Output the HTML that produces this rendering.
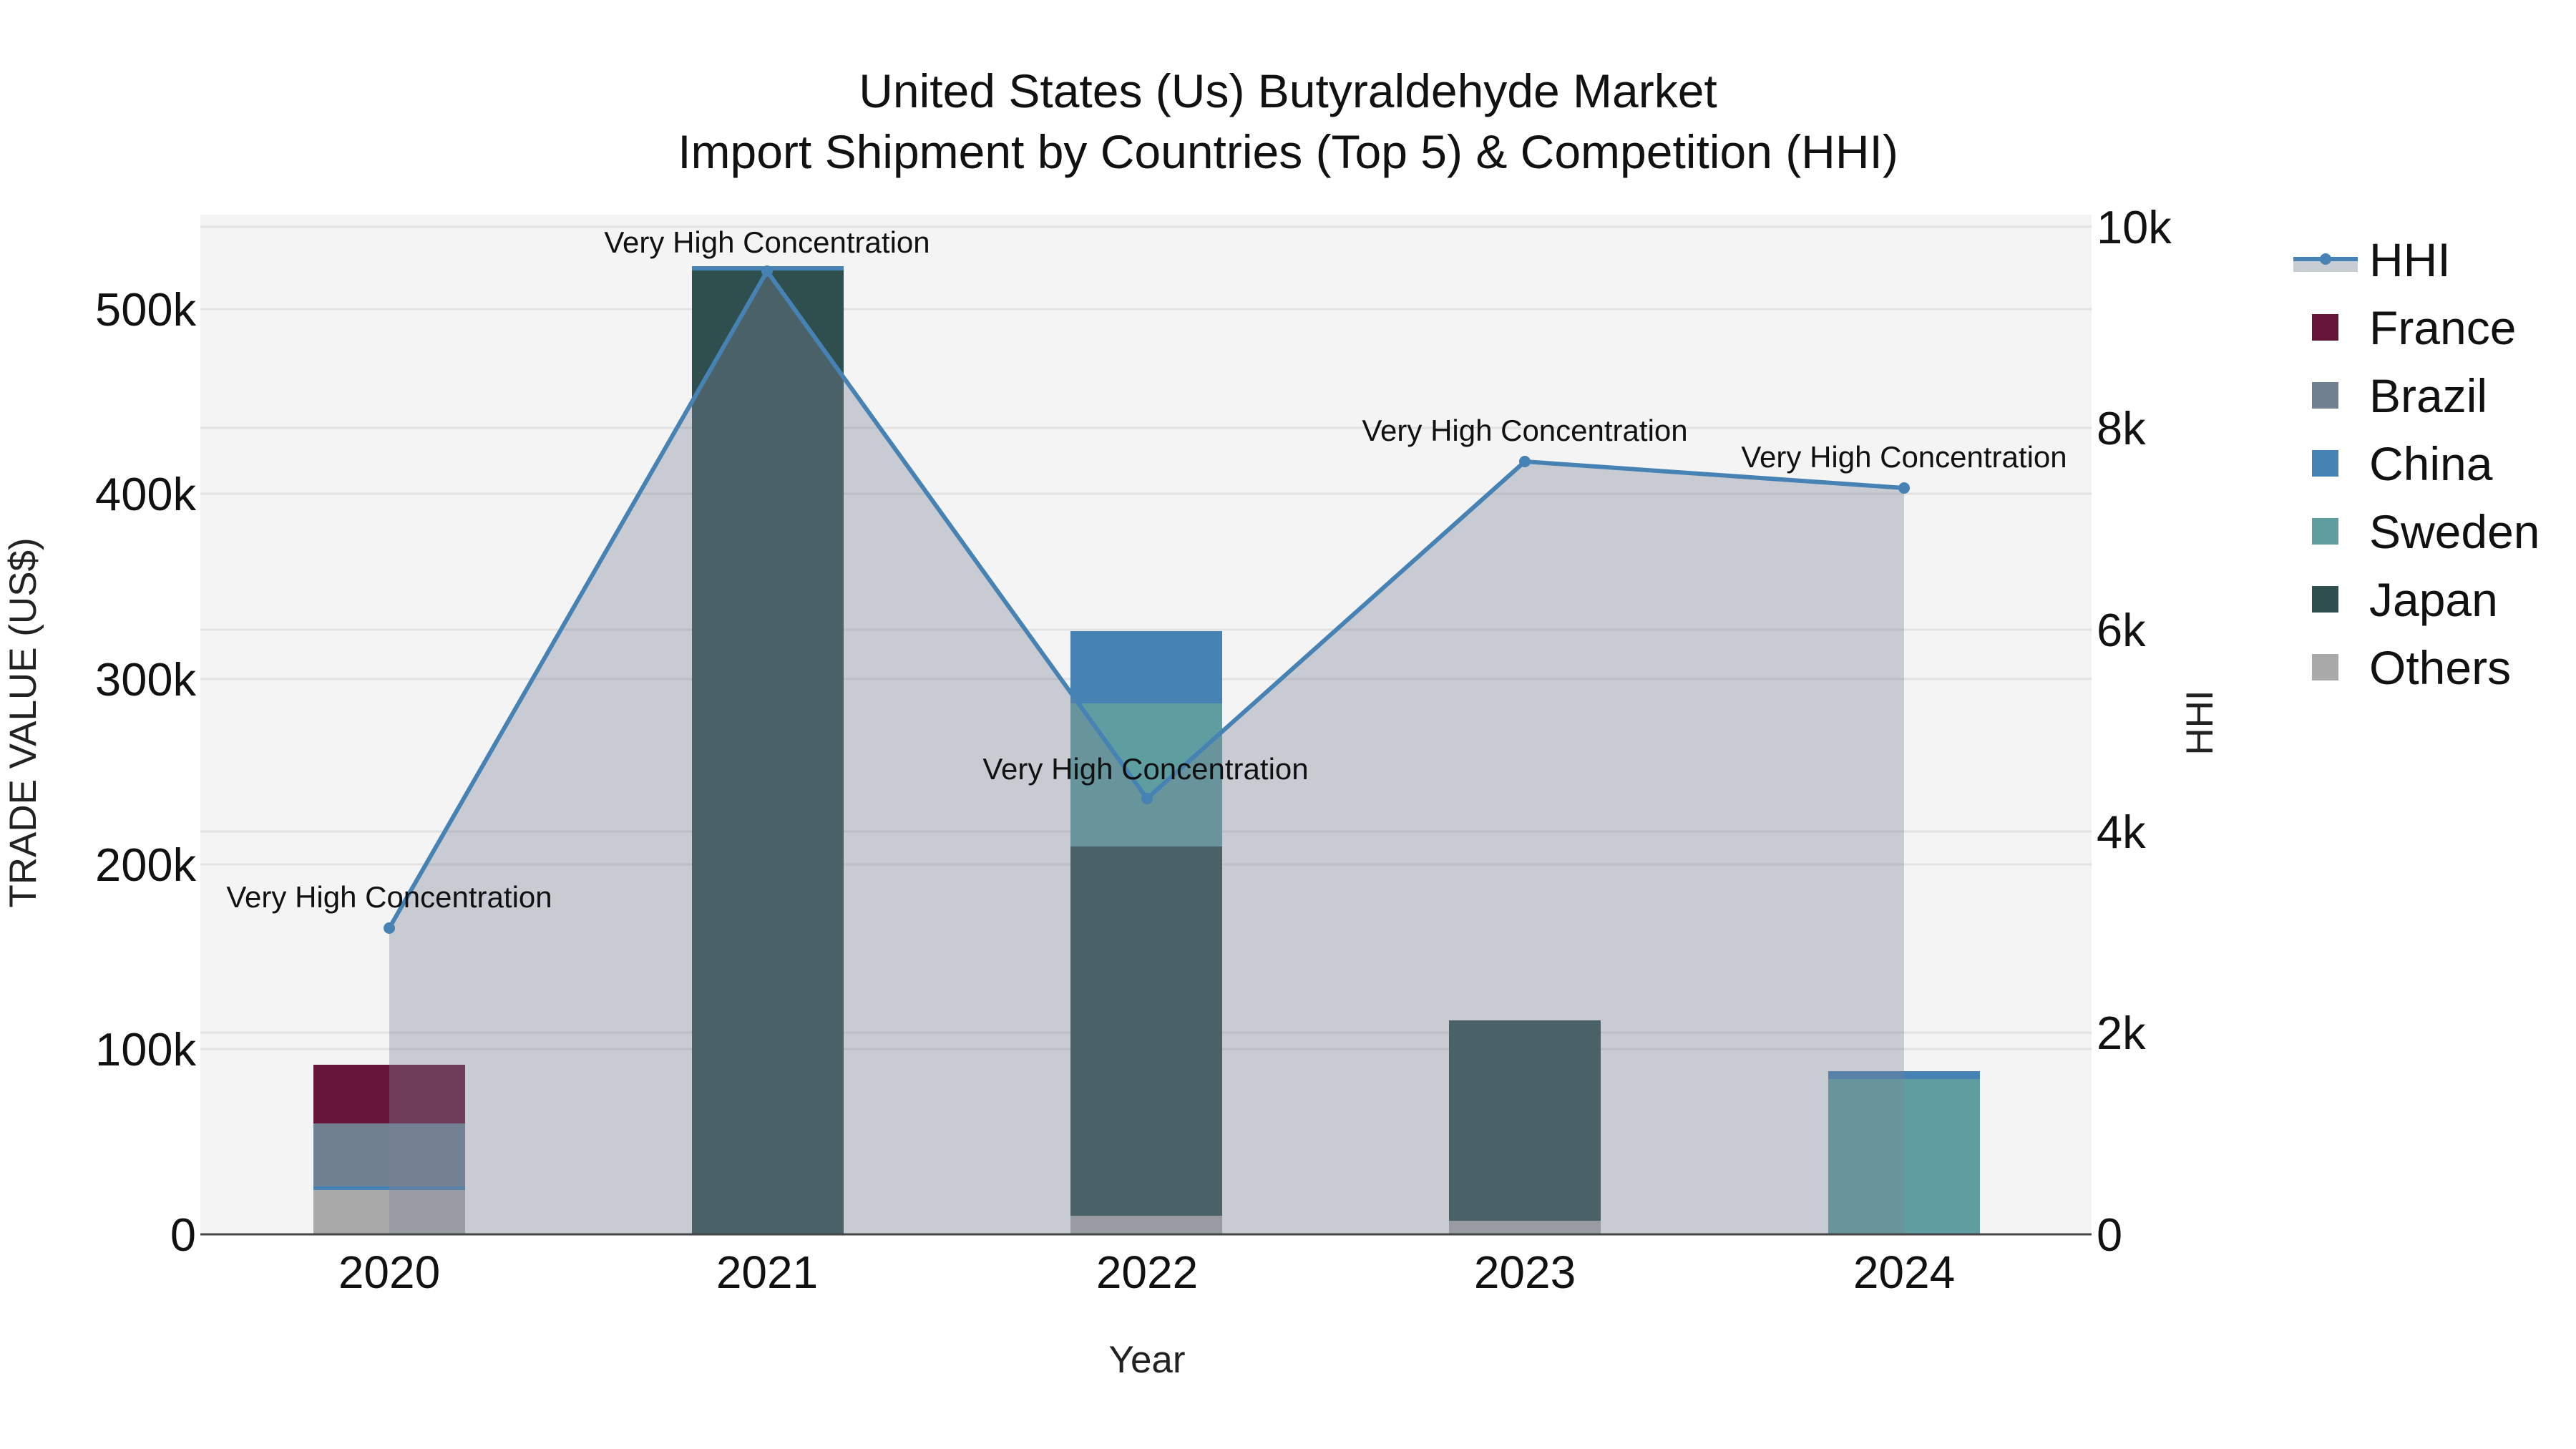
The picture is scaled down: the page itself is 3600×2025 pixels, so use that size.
<!DOCTYPE html>
<html><head><meta charset="utf-8"><style>
html,body{margin:0;padding:0;background:#fff;}
svg{display:block;font-family:"Liberation Sans",sans-serif;}
</style></head><body>
<svg width="3600" height="2025" viewBox="0 0 3600 2025" xmlns="http://www.w3.org/2000/svg">
<rect width="3600" height="2025" fill="#fff"/>
<rect x="280" y="300" width="2643" height="1425" fill="#f4f4f4"/>
<g stroke="#e2e2e2" stroke-width="3">
<line x1="280" x2="2923" y1="1466" y2="1466"/><line x1="280" x2="2923" y1="1208" y2="1208"/>
<line x1="280" x2="2923" y1="949" y2="949"/><line x1="280" x2="2923" y1="690" y2="690"/>
<line x1="280" x2="2923" y1="432" y2="432"/>
<line x1="280" x2="2923" y1="1443" y2="1443"/><line x1="280" x2="2923" y1="1162" y2="1162"/>
<line x1="280" x2="2923" y1="880" y2="880"/><line x1="280" x2="2923" y1="598" y2="598"/>
<line x1="280" x2="2923" y1="317" y2="317"/>
</g>
<rect x="438" y="1660" width="212" height="65" fill="#a9a9a9"/>
<rect x="438" y="1570" width="212" height="90" fill="#708090"/>
<rect x="438" y="1488" width="212" height="82" fill="#641538"/>
<rect x="438" y="1658" width="212" height="5" fill="#4682b4"/>
<rect x="967" y="377" width="212" height="1348" fill="#2f4f4f"/>
<rect x="967" y="372" width="212" height="6" fill="#4682b4"/>
<rect x="1496" y="1699" width="212" height="26" fill="#a9a9a9"/>
<rect x="1496" y="1183" width="212" height="516" fill="#2f4f4f"/>
<rect x="1496" y="983" width="212" height="200" fill="#5f9ea0"/>
<rect x="1496" y="882" width="212" height="101" fill="#4682b4"/>
<rect x="2025" y="1706" width="212" height="19" fill="#a9a9a9"/>
<rect x="2025" y="1426" width="212" height="280" fill="#2f4f4f"/>
<rect x="2555" y="1508" width="212" height="217" fill="#5f9ea0"/>
<rect x="2555" y="1497" width="212" height="11" fill="#4682b4"/>
<polygon points="544,1297 1072,379 1603,1116 2131,645 2661,682 2661,1725 544,1725" fill="rgb(122,130,150)" fill-opacity="0.36"/>
<polyline points="544,1297 1072,379 1603,1116 2131,645 2661,682" fill="none" stroke="#4682b4" stroke-width="6"/>
<g fill="#4682b4"><circle cx="544" cy="1297" r="8"/><circle cx="1072" cy="379" r="8"/><circle cx="1603" cy="1116" r="8"/><circle cx="2131" cy="645" r="8"/><circle cx="2661" cy="682" r="8"/></g>
<line x1="280" x2="2923" y1="1725" y2="1725" stroke="#444" stroke-width="3"/>
<g font-size="42" fill="#111" text-anchor="middle">
<text x="544" y="1268">Very High Concentration</text>
<text x="1072" y="353">Very High Concentration</text>
<text x="1601" y="1089">Very High Concentration</text>
<text x="2131" y="616">Very High Concentration</text>
<text x="2661" y="653">Very High Concentration</text>
</g>
<g font-size="66" fill="#111" text-anchor="middle">
<text x="1800" y="150">United States (Us) Butyraldehyde Market</text>
<text x="1800" y="235">Import Shipment by Countries (Top 5) &amp; Competition (HHI)</text>
</g>
<g font-size="65" fill="#111" text-anchor="end">
<text x="274" y="1748">0</text><text x="274" y="1489">100k</text><text x="274" y="1231">200k</text>
<text x="274" y="972">300k</text><text x="274" y="713">400k</text><text x="274" y="455">500k</text>
</g>
<g font-size="65" fill="#111" text-anchor="start">
<text x="2930" y="1748">0</text><text x="2930" y="1466">2k</text><text x="2930" y="1185">4k</text>
<text x="2930" y="903">6k</text><text x="2930" y="621">8k</text><text x="2930" y="340">10k</text>
</g>
<g font-size="64" fill="#111" text-anchor="middle">
<text x="544" y="1800">2020</text><text x="1072" y="1800">2021</text><text x="1603" y="1800">2022</text>
<text x="2131" y="1800">2023</text><text x="2661" y="1800">2024</text>
</g>
<text x="1603" y="1918" font-size="53" fill="#222" text-anchor="middle">Year</text>
<text transform="translate(50,1010) rotate(-90)" font-size="53" fill="#222" text-anchor="middle">TRADE VALUE (US$)</text>
<text transform="translate(3092,1010) rotate(-90)" font-size="53" fill="#222" text-anchor="middle">HHI</text>
<rect x="3205" y="362" width="90" height="18" fill="#c8ccd3"/>
<line x1="3205" x2="3295" y1="362" y2="362" stroke="#4682b4" stroke-width="6"/>
<circle cx="3250" cy="362" r="8" fill="#4682b4"/>
<g font-size="66" fill="#111">
<text x="3311" y="386">HHI</text>
<text x="3311" y="481">France</text>
<text x="3311" y="576">Brazil</text>
<text x="3311" y="671">China</text>
<text x="3311" y="766">Sweden</text>
<text x="3311" y="861">Japan</text>
<text x="3311" y="956">Others</text>
</g>
<rect x="3231" y="439" width="37" height="37" fill="#641538"/>
<rect x="3231" y="534" width="37" height="37" fill="#708090"/>
<rect x="3231" y="629" width="37" height="37" fill="#4682b4"/>
<rect x="3231" y="724" width="37" height="37" fill="#5f9ea0"/>
<rect x="3231" y="819" width="37" height="37" fill="#2f4f4f"/>
<rect x="3231" y="914" width="37" height="37" fill="#a9a9a9"/>
</svg>
</body></html>
